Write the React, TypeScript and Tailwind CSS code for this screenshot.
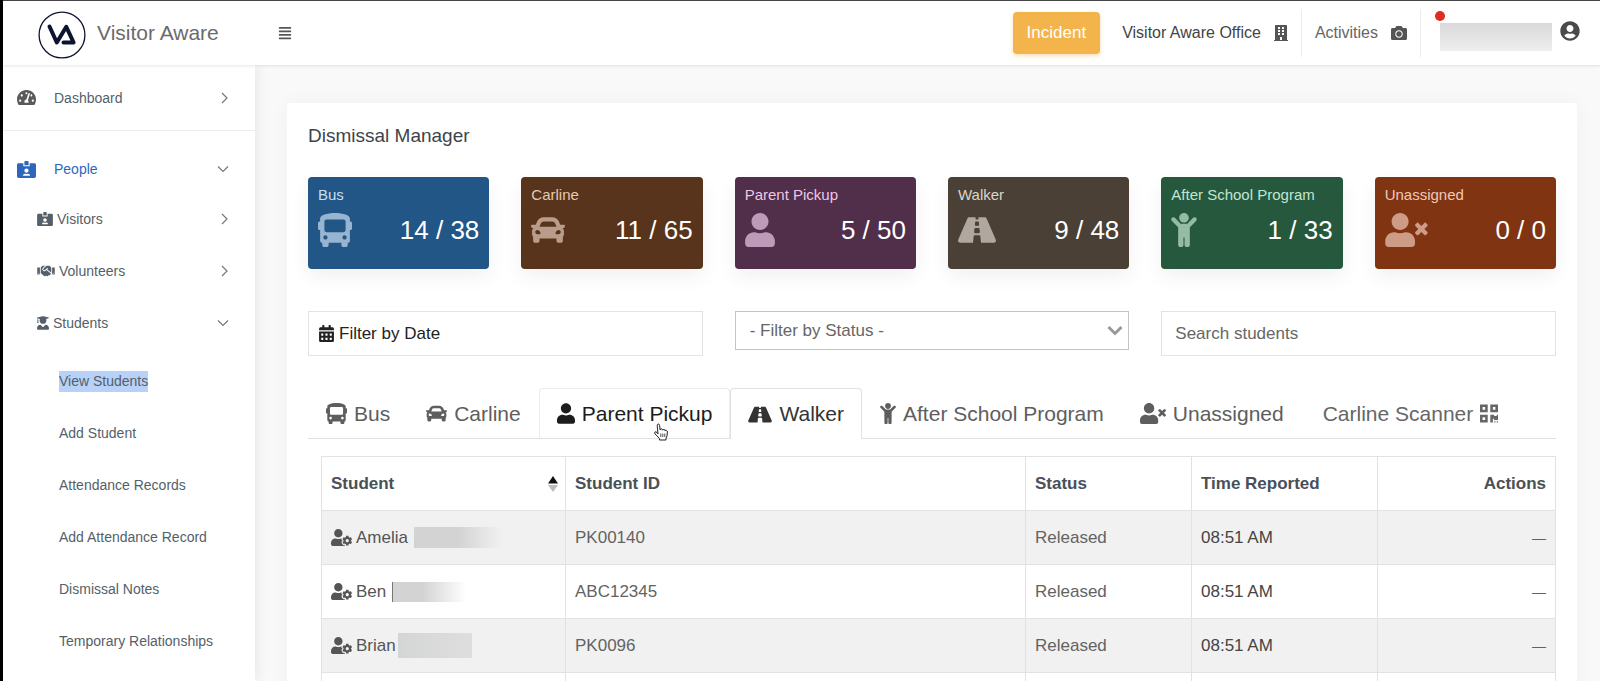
import React, { useState } from "react";
import {
  FaAlignJustify,
  FaBuilding,
  FaBus,
  FaCalendarAlt,
  FaCamera,
  FaCar,
  FaChild,
  FaHandshake,
  FaIdCardAlt,
  FaQrcode,
  FaRoad,
  FaTachometerAlt,
  FaUser,
  FaUserCircle,
  FaUserCog,
  FaUserGraduate,
  FaUserTimes,
} from "react-icons/fa";

const tiles = [
  { label: "Bus", count: "14 / 38", icon: FaBus, size: "w-[34px]", color: "bg-[#225686]", tint: "text-[#c9def2]" },
  { label: "Carline", count: "11 / 65", icon: FaCar, size: "w-[34px]", color: "bg-[#57341b]", tint: "text-[#e3c9b8]" },
  { label: "Parent Pickup", count: "5 / 50", icon: FaUser, size: "w-[30px]", color: "bg-[#512e49]", tint: "text-[#ecc9e6]" },
  { label: "Walker", count: "9 / 48", icon: FaRoad, size: "w-[38px]", color: "bg-[#4a4035]", tint: "text-[#dcd5cc]" },
  { label: "After School Program", count: "1 / 33", icon: FaChild, size: "w-[26px]", color: "bg-[#25583d]", tint: "text-[#c2e6d2]" },
  { label: "Unassigned", count: "0 / 0", icon: FaUserTimes, size: "w-[43px]", color: "bg-[#803412]", tint: "text-[#f0c8b8]" },
];

const tabs = [
  { label: "Bus", icon: FaBus, size: "w-[21px]" },
  { label: "Carline", icon: FaCar, size: "w-[21px]" },
  { label: "Parent Pickup", icon: FaUser, size: "w-[18px]" },
  { label: "Walker", icon: FaRoad, size: "w-[24px]" },
  { label: "After School Program", icon: FaChild, size: "w-[16px]" },
  { label: "Unassigned", icon: FaUserTimes, size: "w-[26px]" },
];

const peopleLinks = [
  { label: "Visitors", icon: FaIdCardAlt, size: "w-4", open: false },
  { label: "Volunteers", icon: FaHandshake, size: "w-[18px]", open: false },
  { label: "Students", icon: FaUserGraduate, size: "w-3", open: true },
];

const studentLinks = [
  "View Students",
  "Add Student",
  "Attendance Records",
  "Add Attendance Record",
  "Dismissal Notes",
  "Temporary Relationships",
];

const students = [
  {
    name: "Amelia",
    id: "PK00140",
    mask: "ml-1.5 h-[21px] w-[88px] bg-linear-to-r from-[#d3d3d3] from-50% to-[#f1f1f1]",
  },
  {
    name: "Ben",
    id: "ABC12345",
    mask: "ml-1.5 h-5 w-[74px] border-l border-[#777] bg-linear-to-r from-[#d3d3d3] from-40% to-white",
  },
  {
    name: "Brian",
    id: "PK0096",
    mask: "ml-0.5 h-[25px] w-[74px] bg-linear-to-r from-[#d4d5d5] to-[#dedede]",
  },
];

function Chevron({ open }: { open?: boolean }) {
  return (
    <svg
      viewBox="0 0 12 12"
      className="ml-auto size-3 fill-none stroke-[#777] stroke-[1.2]"
      aria-hidden="true"
    >
      <path d={open ? "M1 3.5 L6 8.5 L11 3.5" : "M5 1 L10 6 L5 11"} />
    </svg>
  );
}

function Logo() {
  return (
    <svg viewBox="0 0 48 48" className="size-12 fill-none stroke-[#0d1430]" aria-hidden="true">
      <circle cx="24" cy="24" r="22.9" strokeWidth="1.3" />
      <path
        d="M11.5 15.5 L18.8 31.5 L28.3 15.8 L35.6 31.5 H25.5"
        strokeWidth="4"
        strokeLinecap="round"
        strokeLinejoin="round"
      />
    </svg>
  );
}

// Hand pointer shown over the hovered tab
function HandPointer() {
  return (
    <svg
      viewBox="0 0 16 18"
      className="pointer-events-none absolute top-[34px] left-[113px] h-[18px] w-4"
      aria-hidden="true"
    >
      <path
        d="M5 11 L4.2 2.6 Q4.2 1 5.3 1 Q6.4 1 6.6 2.6 L7.2 7 Q7.4 5.6 8.5 5.8 Q9.5 6 9.6 7.2 Q10 6.2 11 6.4 Q12 6.7 12 7.8 Q12.6 7 13.5 7.4 Q14.5 7.8 14.4 9 L14 13 L13 15.2 V17 H6.5 V15.6 L2.2 11 Q1 9.6 2 8.9 Q2.9 8.4 4 9.6 Z"
        fill="#fff"
        stroke="#222"
        strokeWidth="1"
        strokeLinejoin="round"
      />
      <path d="M7.8 10.5 V14 M9.8 10.5 V14 M11.8 10.5 V14" stroke="#222" strokeWidth="0.8" />
    </svg>
  );
}

function Header() {
  return (
    <header className="relative z-10 flex h-[65px] shrink-0 items-center border-t border-[#444] bg-white pr-5 shadow-[0_1px_3px_rgba(0,0,0,0.1)]">
      <a href="#" className="flex w-[252px] items-center gap-[11px] pt-1 pl-[35px] text-[21px] text-[#6b6b6b]">
        <Logo />
        <span className="pb-1">Visitor Aware</span>
      </a>
      <button type="button" aria-label="Toggle menu" className="ml-[23px] text-[#555]">
        <FaAlignJustify className="size-[14px]" />
      </button>

      <div className="ml-auto flex items-center text-base text-[#555]">
        <button
          type="button"
          className="mr-[22px] h-[42px] rounded bg-[#f4b44c] px-[14px] text-[17px] text-white shadow-[0_2px_4px_rgba(244,180,76,0.4)]"
        >
          Incident
        </button>
        <a href="#" className="flex h-12 items-center gap-[13px] text-[#444]">
          Visitor Aware Office
          <FaBuilding className="h-4 w-[14px] text-[#555]" />
        </a>
        <a href="#" className="ml-[13px] flex h-12 items-center gap-[13px] border-x border-[#ececec] px-[13px] text-[#666]">
          Activities
          <FaCamera className="size-4 text-[#555]" />
        </a>
        <a href="#" aria-label="Account" className="ml-[19px] flex items-center gap-2 pt-2">
          <span className="relative h-7 w-28 bg-linear-to-b from-[#d9d9d9] to-[#efefef]">
            <span className="absolute -top-3 -left-[5px] size-[10px] rounded-full bg-[#e02b22]" />
          </span>
          <FaUserCircle className="mb-3 size-5 text-[#4a4a4a]" />
        </a>
      </div>
    </header>
  );
}

function Sidebar() {
  return (
    <nav className="w-[252px] shrink-0 bg-white text-sm text-[#545f69] shadow-[0_0_14px_rgba(0,0,0,0.1)]">
      <a href="#" className="flex h-[66px] items-center border-b border-[#ececec] pr-[26px] pl-[14px]">
        <FaTachometerAlt className="mr-[18px] h-[17px] w-[19px] text-[#5a5a5a]" />
        Dashboard
        <Chevron />
      </a>
      <div className="pt-[14px]">
        <a href="#" className="flex h-12 items-center pr-[26px] pl-[14px] text-[#2f66bd]">
          <FaIdCardAlt className="mr-[18px] h-[17px] w-[19px]" />
          People
          <Chevron open />
        </a>
        {peopleLinks.map(({ label, icon: Icon, size, open }) => (
          <a key={label} href="#" className="flex h-13 items-center gap-1 pr-[26px] pl-[34px]">
            <Icon className={`h-[14px] ${size}`} />
            {label}
            <Chevron open={open} />
          </a>
        ))}
        <div className="pt-[6px]">
          {studentLinks.map((label, i) => (
            <a key={label} href="#" className="flex h-13 items-center pl-14">
              <span className={i === 0 ? "bg-[#b8d1f8] leading-[21px]" : ""}>{label}</span>
            </a>
          ))}
        </div>
      </div>
    </nav>
  );
}

function Filters() {
  return (
    <div className="mt-[42px] grid grid-cols-3 items-start gap-8 text-[17px]">
      <button
        type="button"
        className="flex h-[45px] items-center gap-[5px] border border-[#e3e3e3] px-[10px] text-[#222]"
      >
        <FaCalendarAlt className="h-[17px] w-[15px]" />
        Filter by Date
      </button>
      <div className="relative">
        <select
          aria-label="Filter by status"
          className="h-[39px] w-full appearance-none border border-[#c4c4c4] bg-white px-[14px] text-[#666]"
        >
          <option>- Filter by Status -</option>
        </select>
        <svg
          viewBox="0 0 16 12"
          className="pointer-events-none absolute top-[14px] right-[6px] h-3 w-4 fill-none stroke-[#999] stroke-3"
          aria-hidden="true"
        >
          <path d="M1.5 2 L8 8.5 L14.5 2" />
        </svg>
      </div>
      <input
        type="text"
        aria-label="Search students"
        placeholder="Search students"
        className="h-[45px] w-full border border-[#e3e3e3] px-[13px] placeholder:text-[#666]"
      />
    </div>
  );
}

function StudentTable() {
  const cell = "border border-[#e0e2e3] px-[9px]";

  return (
    <table className="w-full table-fixed border-collapse text-left text-[17px] text-[#636363]">
      <colgroup>
        <col className="w-[244px]" />
        <col />
        <col className="w-[166px]" />
        <col className="w-[186px]" />
        <col className="w-[178px]" />
      </colgroup>
      <thead className="text-[#495057]">
        <tr className="h-[54px]">
          <th className={cell}>
            <button type="button" className="flex w-full items-center justify-between">
              Student
              <svg viewBox="0 0 10 16" className="-mr-0.5 h-4 w-[10px]" aria-hidden="true">
                <path d="M0 7.5 L5 0 L10 7.5 Z" fill="#111" />
                <path d="M0 9 L5 16 L10 9 Z" fill="#bbb" />
              </svg>
            </button>
          </th>
          <th className={cell}>Student ID</th>
          <th className={cell}>Status</th>
          <th className={cell}>Time Reported</th>
          <th className={cell + " text-right"}>Actions</th>
        </tr>
      </thead>
      <tbody>
        {students.map((student) => (
          <tr key={student.id} className="h-[54px] odd:bg-[#f1f1f1]">
            <td className={cell}>
              <a href="#" className="flex items-center text-[#555]">
                <FaUserCog className="mr-1 h-[17px] w-[21px]" />
                {student.name}
                <span className={student.mask} />
              </a>
            </td>
            <td className={cell}>{student.id}</td>
            <td className={cell}>Released</td>
            <td className={cell + " text-[#444]"}>08:51 AM</td>
            <td className={cell + " text-right text-sm"}>—</td>
          </tr>
        ))}
        <tr className="h-[54px]">
          <td className={cell} />
          <td className={cell} />
          <td className={cell} />
          <td className={cell} />
          <td className={cell} />
        </tr>
      </tbody>
    </table>
  );
}

export default function App() {
  const [activeTab, setActiveTab] = useState("Walker");

  const tabStyle = (label: string) => {
    if (label === activeTab) {
      return "border-[#dee2e6] bg-white text-[#333]";
    }
    if (label === "Parent Pickup") {
      return "mb-px border-[#e9ecef] text-[#1c1c1e]";
    }
    return "mb-px border-transparent text-[#5e5e5e]";
  };

  return (
    <div className="flex h-screen flex-col overflow-hidden border-l-[3px] border-black bg-[#f9f9f9] font-['Liberation_Sans',Arial,sans-serif]">
      <Header />
      <div className="flex min-h-0 grow">
        <Sidebar />
        <main className="min-w-0 grow pt-[38px] pr-[23px] pl-8">
          <section className="rounded bg-white px-[21px] pt-[19px] shadow-[0_0_20px_rgba(0,0,0,0.04)]">
            <h1 className="text-[19px] leading-7 text-[#3d444b]">Dismissal Manager</h1>

            {/* Dismissal counts */}
            <div className="mt-[27px] grid grid-cols-6 gap-8">
              {tiles.map(({ label, count, icon: Icon, size, color, tint }) => (
                <div
                  key={label}
                  className={`rounded px-[10px] pt-2 pb-[22px] shadow-[0_8px_20px_rgba(0,0,0,0.06)] ${color} ${tint}`}
                >
                  <p className="text-[15px] leading-5">{label}</p>
                  <div className="mt-2 flex items-center justify-between">
                    <Icon className={`h-[34px] opacity-70 ${size}`} />
                    <span className="text-[26px] leading-[34px] text-white">{count}</span>
                  </div>
                </div>
              ))}
            </div>

            <Filters />

            {/* Tabs, the active one covers the line below */}
            <div className="mt-8 border-b border-[#dee2e6] text-[21px]">
              <div className="-mb-px flex h-[51px] items-stretch" role="tablist">
                {tabs.map(({ label, icon: Icon, size }) => (
                  <button
                    key={label}
                    type="button"
                    role="tab"
                    aria-selected={label === activeTab}
                    onClick={() => setActiveTab(label)}
                    className={`relative flex items-center gap-[7px] rounded-t border border-b-0 px-[17px] whitespace-nowrap ${tabStyle(label)}`}
                  >
                    <Icon className={`h-[21px] ${size}`} />
                    {label}
                    {label === "Parent Pickup" && <HandPointer />}
                  </button>
                ))}
                <a
                  href="#"
                  className="mb-px flex items-center gap-[7px] border border-b-0 border-transparent px-5 whitespace-nowrap text-[#666]"
                >
                  Carline Scanner
                  <FaQrcode className="h-[21px] w-[18px]" />
                </a>
              </div>
            </div>

            <div className="pt-[17px] pl-[13px]">
              <StudentTable />
            </div>
          </section>
        </main>
      </div>
    </div>
  );
}
